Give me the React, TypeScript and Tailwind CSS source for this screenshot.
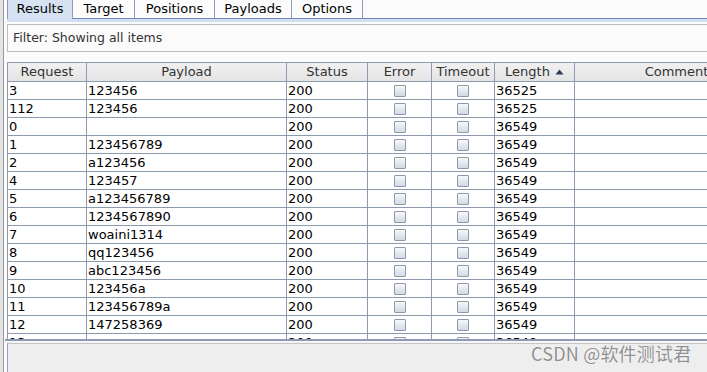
import React from 'react';

interface ResultRow {
  request: string;
  payload: string;
  status: string;
  length: string;
}

const rows: ResultRow[] = [
  { request: '3', payload: '123456', status: '200', length: '36525' },
  { request: '112', payload: '123456', status: '200', length: '36525' },
  { request: '0', payload: '', status: '200', length: '36549' },
  { request: '1', payload: '123456789', status: '200', length: '36549' },
  { request: '2', payload: 'a123456', status: '200', length: '36549' },
  { request: '4', payload: '123457', status: '200', length: '36549' },
  { request: '5', payload: 'a123456789', status: '200', length: '36549' },
  { request: '6', payload: '1234567890', status: '200', length: '36549' },
  { request: '7', payload: 'woaini1314', status: '200', length: '36549' },
  { request: '8', payload: 'qq123456', status: '200', length: '36549' },
  { request: '9', payload: 'abc123456', status: '200', length: '36549' },
  { request: '10', payload: '123456a', status: '200', length: '36549' },
  { request: '11', payload: '123456789a', status: '200', length: '36549' },
  { request: '12', payload: '147258369', status: '200', length: '36549' },
  { request: '13', payload: 'aaaaaa', status: '200', length: '36549' },
];

const tabs = ['Results', 'Target', 'Positions', 'Payloads', 'Options'];
const tabWidths: Record<string, string> = {
  Results: 'w-[66px]',
  Target: 'w-[62px]',
  Positions: 'w-[80px]',
  Payloads: 'w-[77px]',
  Options: 'w-[71px]',
};

// Column widths include the 1px right grid line
const cols = {
  request: 'w-[79px]',
  payload: 'w-[200px]',
  status: 'w-[81px]',
  error: 'w-[64px]',
  timeout: 'w-[63px]',
  length: 'w-[80px]',
  comment: 'w-[204px]',
};

const Checkbox: React.FC = () => (
  <div className="w-[12px] h-[12px] border border-[#8f99aa] bg-gradient-to-b from-[#f7f9fc] to-[#d2dae6] rounded-[1px]" />
);

const HeaderCell: React.FC<{ width: string; children: React.ReactNode }> = ({ width, children }) => (
  <div className={`${width} shrink-0 h-full border-r border-[#8e9ab0] flex items-center justify-center text-[#333]`}>
    {children}
  </div>
);

const App: React.FC = () => {
  return (
    <div
      className="w-[707px] h-[372px] overflow-hidden bg-[#fbfbfb] flex text-[13px] text-black"
      style={{ fontFamily: '"DejaVu Sans", "Liberation Sans", sans-serif' }}
    >
      {/* left window edge */}
      <div className="w-[3px] shrink-0 bg-[#e3e3e3]" />
      <div className="flex-1 min-w-0 border-l border-[#9a9a9a] flex flex-col relative">
        {/* Tabs */}
        <div className="h-[19px] flex items-end pl-[3px]">
          {tabs.map((tab) => {
            const selected = tab === 'Results';
            return (
              <div
                key={tab}
                className={`${tabWidths[tab]} shrink-0 h-[19px] flex items-center justify-center leading-none border-r border-[#8d9bb8] ${
                  selected ? 'bg-[#d6e2f2] border-l' : 'bg-[#fcfcfc] border-b border-b-[#7389bd]'
                }`}
              >
                <span className="-mt-[2px]">{tab}</span>
              </div>
            );
          })}
          <div className="flex-1 h-full border-b border-[#7389bd]" />
        </div>
        <div className="h-[3px] ml-[3px] bg-[#d3dff0]" />

        {/* Filter */}
        <div className="mt-[2px] ml-[3px] h-[28px] border-y border-l border-[#bdbdbd] bg-[#fbfbfb] flex items-center pl-[5px] pt-px text-[#333] text-[12.5px]">
          Filter: Showing all items
        </div>

        {/* Table */}
        <div className="mt-[10px] ml-[3px] h-[277px] overflow-hidden border-l border-[#8e9ab0] bg-white">
          <div className="h-[20px] flex border-y border-[#8e9ab0] bg-gradient-to-b from-[#f1f1f1] to-[#e4e4e4] w-max">
            <HeaderCell width={cols.request}>Request</HeaderCell>
            <HeaderCell width={cols.payload}>Payload</HeaderCell>
            <HeaderCell width={cols.status}>Status</HeaderCell>
            <HeaderCell width={cols.error}>Error</HeaderCell>
            <HeaderCell width={cols.timeout}>Timeout</HeaderCell>
            <HeaderCell width={cols.length}>
              <span>Length</span>
              <svg width="9" height="6" viewBox="0 0 9 6" className="ml-[5px]">
                <path d="M0.5 5.5 L4.5 0.5 L8.5 5.5 Z" fill="#2c3b57" />
              </svg>
            </HeaderCell>
            <HeaderCell width={cols.comment}>Comment</HeaderCell>
          </div>
          {rows.map((r) => (
            <div key={r.request} className="h-[18px] flex border-b border-[#8e9ab0] w-max">
              <div className={`${cols.request} shrink-0 border-r border-[#8e9ab0] pl-px leading-[17px]`}>{r.request}</div>
              <div className={`${cols.payload} shrink-0 border-r border-[#8e9ab0] pl-px leading-[17px]`}>{r.payload}</div>
              <div className={`${cols.status} shrink-0 border-r border-[#8e9ab0] pl-px leading-[17px]`}>{r.status}</div>
              <div className={`${cols.error} shrink-0 border-r border-[#8e9ab0] flex items-center justify-center`}>
                <Checkbox />
              </div>
              <div className={`${cols.timeout} shrink-0 border-r border-[#8e9ab0] flex items-center justify-center`}>
                <Checkbox />
              </div>
              <div className={`${cols.length} shrink-0 border-r border-[#8e9ab0] pl-px leading-[17px]`}>{r.length}</div>
              <div className={`${cols.comment} shrink-0 border-r border-[#8e9ab0]`} />
            </div>
          ))}
        </div>

        {/* split bar */}
        <div className="h-[4px] ml-[1px] border-t-2 border-[#8c9ab8] bg-[#f6f6f6]" />

        {/* bottom panel */}
        <div className="flex-1 ml-[3px] border-t border-l border-t-[#c4c4c4] border-l-[#8c9fca] bg-[#eeeeee]" />

        {/* watermark */}
        <div
          className="absolute left-[527px] top-[342px] text-[18px] leading-[22px] text-[#909090] tracking-[0.2px]"
          style={{
            fontFamily: '"Noto Sans CJK SC", "Noto Sans", sans-serif',
            textShadow: '0 0 1px #ffffff, 0 0 1px #ffffff',
          }}
        >
          CSDN @软件测试君
        </div>
      </div>
    </div>
  );
};

export default App;
